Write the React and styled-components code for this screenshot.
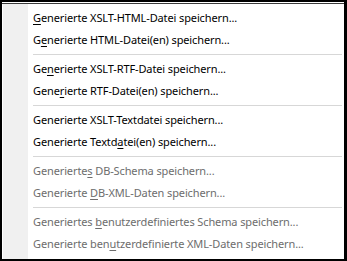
import React from "react";
import styled, { createGlobalStyle } from "styled-components";

const Global = createGlobalStyle`
  html, body { margin: 0; padding: 0; background: #fff; }
  body { font-family: "Noto Sans", "Liberation Sans", sans-serif; }
`;

const Frame = styled.div`
  box-sizing: border-box;
  width: 347px;
  height: 261px;
  border: 2px solid #000;
  border-right-width: 3px;
  background: #fff;
  padding-top: 1px;
  display: flex;
`;

const Menu = styled.div`
  flex: 1;
  display: flex;
  border-top: 1px solid #3a3a3a;
  padding-left: 1px;
`;

const Gutter = styled.div`
  width: 25px;
  background: #f0f0f0;
  flex: none;
`;

const List = styled.ul`
  list-style: none;
  margin: 0;
  padding: 3px 0 0 0;
  flex: 1;
`;

const Item = styled.li`
  height: 22px;
  line-height: 22px;
  padding-left: 5px;
  font-size: 11px;
  letter-spacing: -0.12px;
  color: ${(p) => (p.$disabled ? "#6d6d6d" : "#000")};
  white-space: nowrap;
`;

const Key = styled.span`
  text-decoration: underline;
  text-underline-offset: 2px;
`;

const Separator = styled.li`
  height: 7px;
  display: flex;
  align-items: center;
  padding-left: 5px;
  padding-right: 2px;
  &::after {
    content: "";
    flex: 1;
    height: 1px;
    background: #d7d7d7;
  }
`;

const groups = [
  [
    { t: "Generierte XSLT-HTML-Datei speichern...", k: 0 },
    { t: "Generierte HTML-Datei(en) speichern...", k: 1 },
  ],
  [
    { t: "Generierte XSLT-RTF-Datei speichern...", k: 2 },
    { t: "Generierte RTF-Datei(en) speichern...", k: 4 },
  ],
  [
    { t: "Generierte XSLT-Textdatei speichern...", k: -1 },
    { t: "Generierte Textdatei(en) speichern...", k: 16 },
  ],
  [
    { t: "Generiertes DB-Schema speichern...", k: 10, d: true },
    { t: "Generierte DB-XML-Daten speichern...", k: 11, d: true },
  ],
  [
    { t: "Generiertes benutzerdefiniertes Schema speichern...", k: 12, d: true },
    { t: "Generierte benutzerdefinierte XML-Daten speichern...", k: 14, d: true },
  ],
];

function Label({ t, k }) {
  if (k < 0) return t;
  return (
    <>
      {t.slice(0, k)}
      <Key>{t[k]}</Key>
      {t.slice(k + 1)}
    </>
  );
}

export default function App() {
  return (
    <>
      <Global />
      <Frame>
        <Menu>
          <Gutter />
          <List>
            {groups.map((g, gi) => (
              <React.Fragment key={gi}>
                {gi > 0 && <Separator />}
                {g.map((it, i) => (
                  <Item key={i} $disabled={it.d}>
                    <Label t={it.t} k={it.k} />
                  </Item>
                ))}
              </React.Fragment>
            ))}
          </List>
        </Menu>
      </Frame>
    </>
  );
}
